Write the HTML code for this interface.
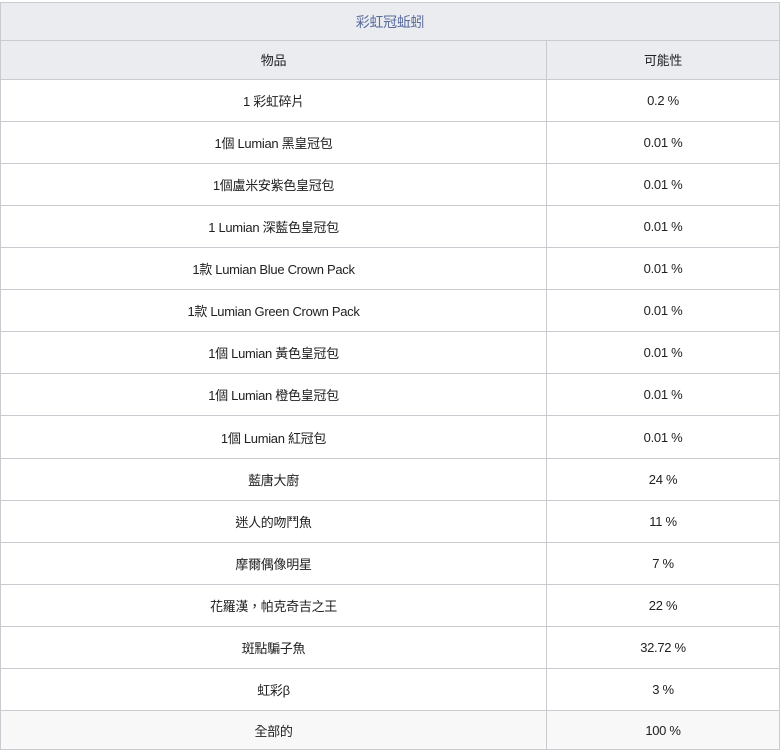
<!DOCTYPE html>
<html><head><meta charset="utf-8"><style>
body{margin:0;background:#fff;width:780px;height:750px;overflow:hidden;font-family:"Liberation Sans","Noto Sans CJK TC",sans-serif;font-size:13px;color:#202122;letter-spacing:-0.3px;}
.r{position:absolute;left:0;width:778px;border:1px solid #c8ccd1;border-top:none;display:flex;}
.c{display:flex;align-items:center;justify-content:center;}
.a{width:545px;border-right:1px solid #c8ccd1;}
.b{flex:1;}
</style></head><body>
<div class="r c" style="top:2px;height:37px;border-top:1px solid #c8ccd1;background:#eaecf0;color:#5a6a9c;font-size:14px;z-index:2;">彩虹冠蚯蚓</div>
<div id="rows"></div>
<script>
var d=[["物品","可能性"],["1 彩虹碎片","0.2 %"],["1個 Lumian 黑皇冠包","0.01 %"],["1個盧米安紫色皇冠包","0.01 %"],["1 Lumian 深藍色皇冠包","0.01 %"],["1款 Lumian Blue Crown Pack","0.01 %"],["1款 Lumian Green Crown Pack","0.01 %"],["1個 Lumian 黃色皇冠包","0.01 %"],["1個 Lumian 橙色皇冠包","0.01 %"],["1個 Lumian 紅冠包","0.01 %"],["藍唐大廚","24 %"],["迷人的吻鬥魚","11 %"],["摩爾偶像明星","7 %"],["花羅漢，帕克奇吉之王","22 %"],["斑點騙子魚","32.72 %"],["虹彩β","3 %"],["全部的","100 %"]];
var tops=[40,80,122,164,206,248,290,332,374,416,459,501,543,585,627,669,711,750];
var h="";
for(var i=0;i<d.length;i++){var bg=i==0?"#eaecf0":(i==d.length-1?"#f8f8f8":"#fff");
h+='<div class="r" style="top:'+tops[i]+'px;height:'+(tops[i+1]-tops[i]-1)+'px;background:'+bg+'"><div class="c a">'+d[i][0]+'</div><div class="c b">'+d[i][1]+'</div></div>';}
document.getElementById("rows").innerHTML=h;
</script>
</body></html>
